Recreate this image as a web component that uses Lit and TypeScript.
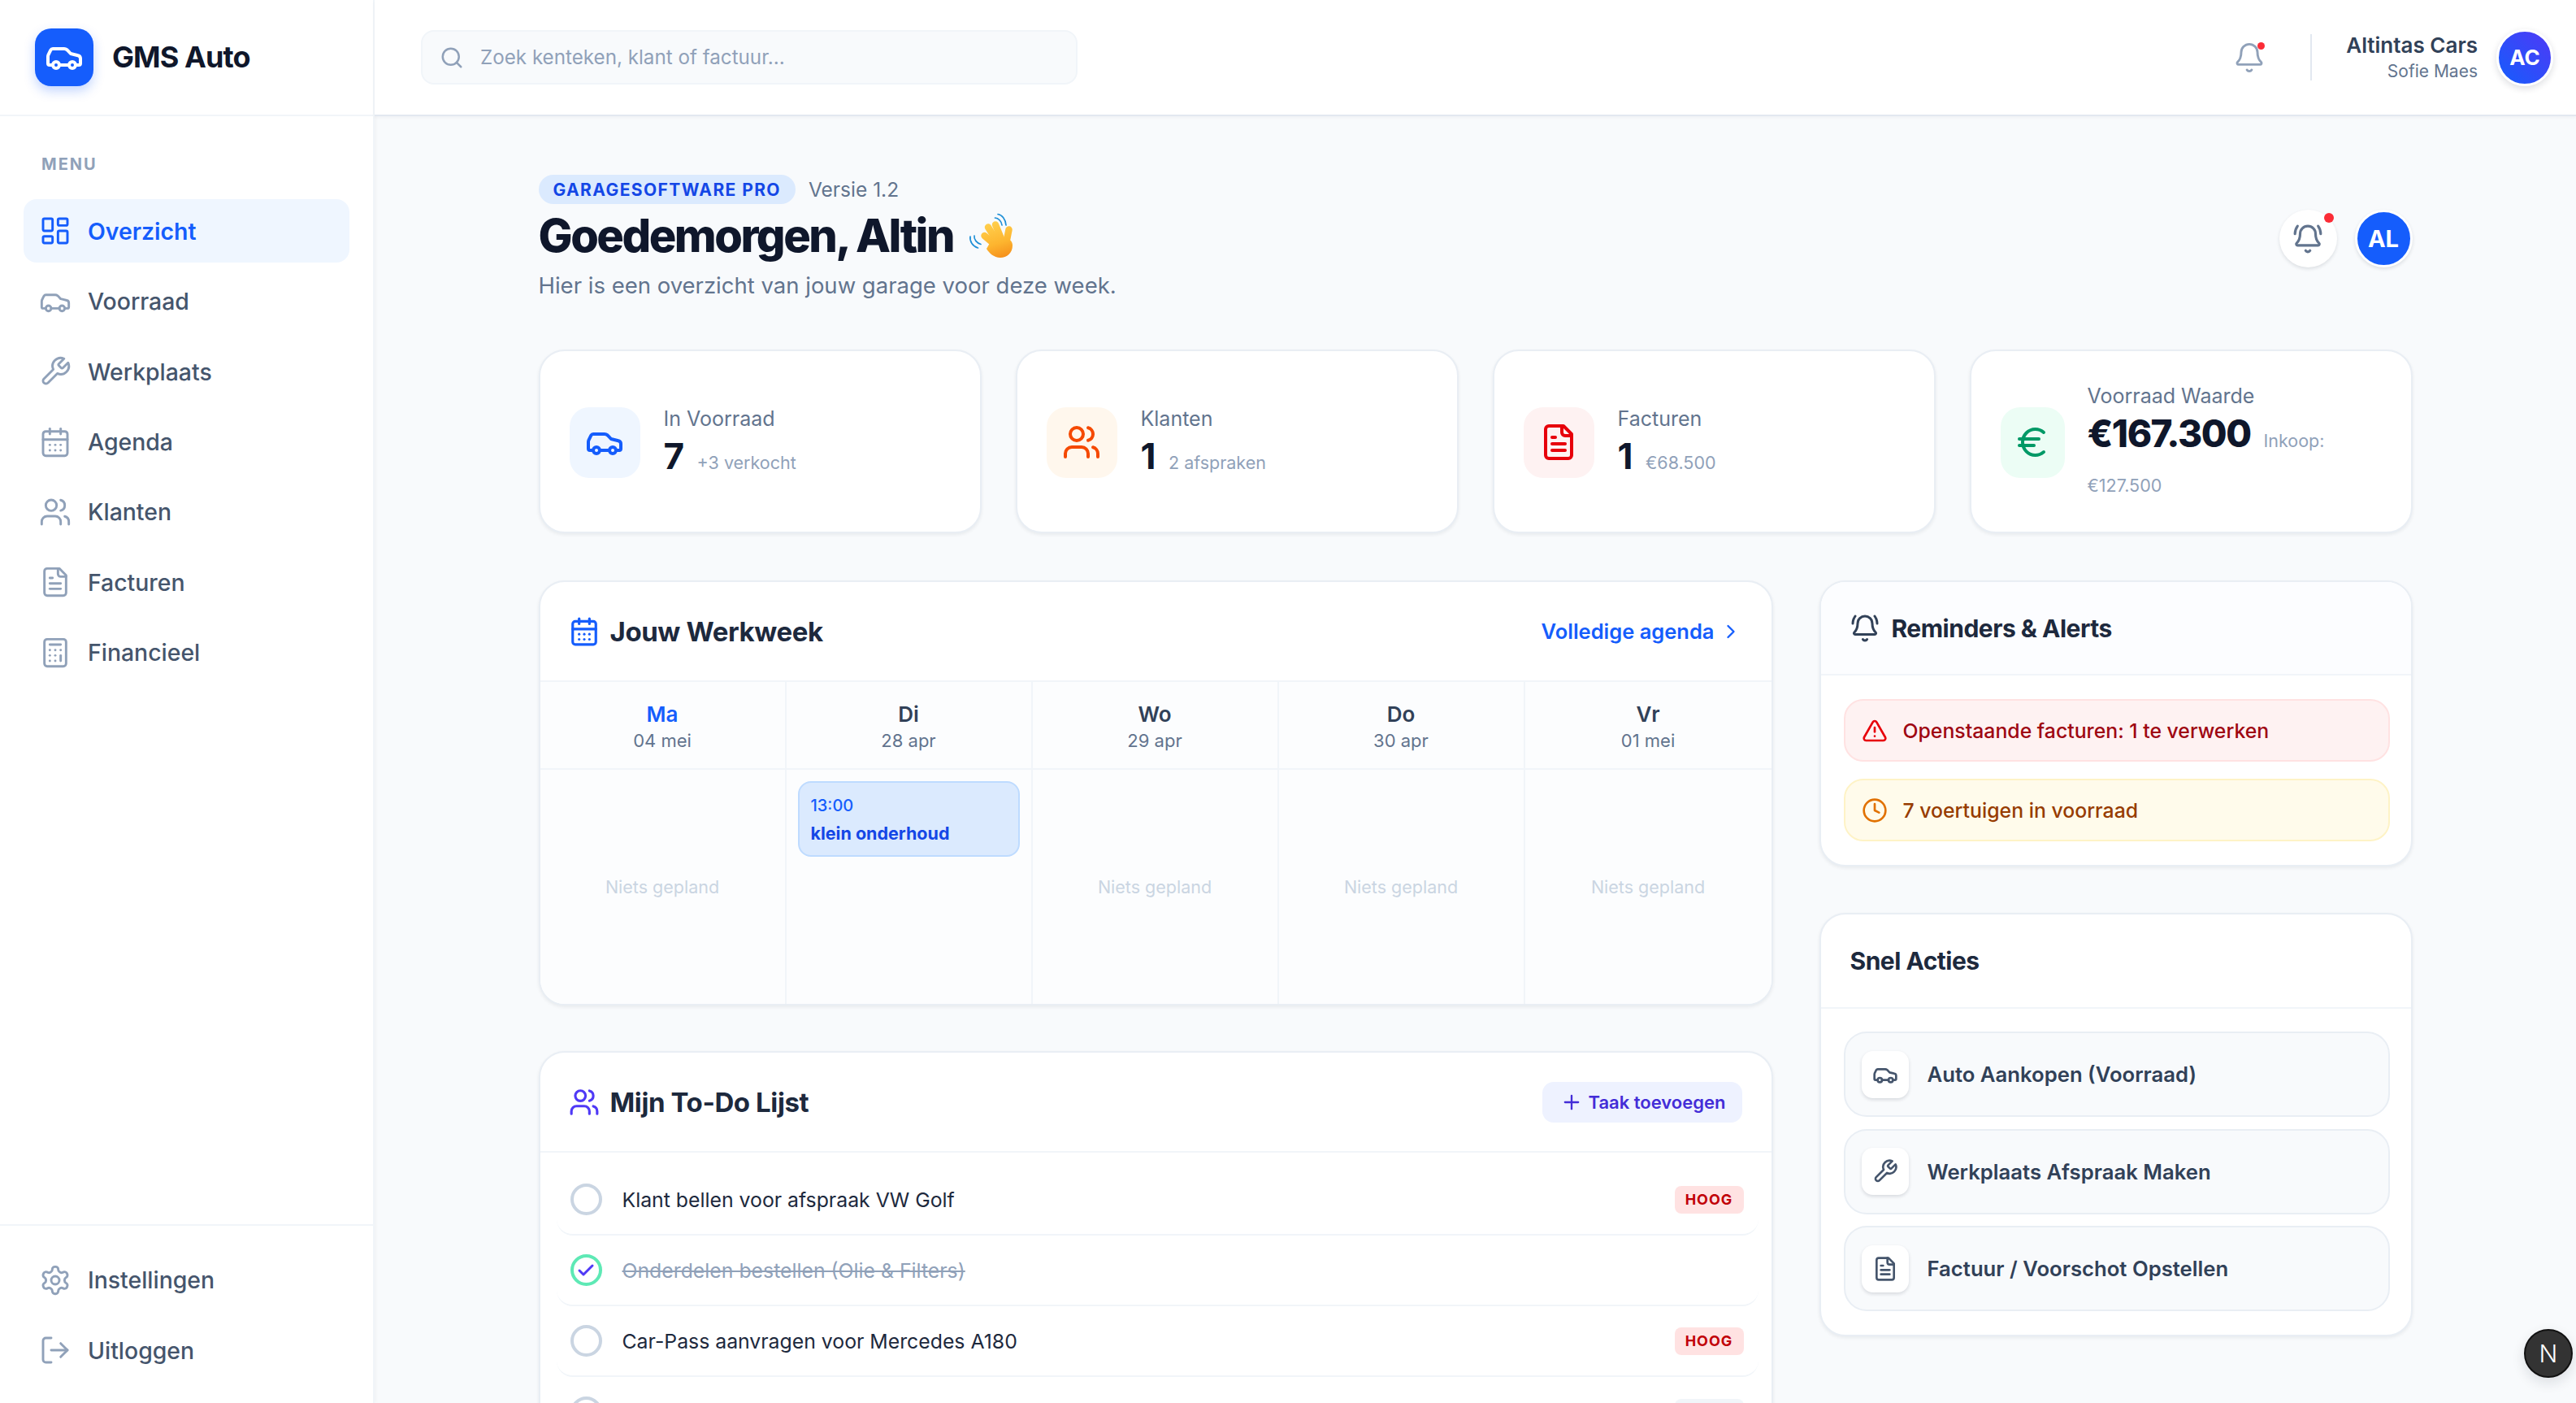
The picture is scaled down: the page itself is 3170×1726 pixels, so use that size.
import { LitElement, html, css, svg } from "lit";
import { customElement } from "lit/decorators.js";

const I: Record<string, any> = {
  car: svg`<path d="M19 17h2c.6 0 1-.4 1-1v-3c0-.9-.7-1.7-1.5-1.9C18.7 10.6 16 10 16 10s-1.3-1.4-2.2-2.3c-.5-.4-1.1-.7-1.8-.7H5c-.6 0-1.1.4-1.4.9l-1.4 2.9A3.7 3.7 0 0 0 2 12v4c0 .6.4 1 1 1h2"/><circle cx="7" cy="17" r="2"/><path d="M9 17h6"/><circle cx="17" cy="17" r="2"/>`,
  dash: svg`<rect width="7" height="9" x="3" y="3" rx="1"/><rect width="7" height="5" x="14" y="3" rx="1"/><rect width="7" height="9" x="14" y="12" rx="1"/><rect width="7" height="5" x="3" y="16" rx="1"/>`,
  wrench: svg`<path d="M14.7 6.3a1 1 0 0 0 0 1.4l1.6 1.6a1 1 0 0 0 1.4 0l3.77-3.77a6 6 0 0 1-7.94 7.94l-6.91 6.91a2.12 2.12 0 0 1-3-3l6.91-6.91a6 6 0 0 1 7.94-7.94l-3.76 3.76z"/>`,
  cal: svg`<path d="M8 2v4"/><path d="M16 2v4"/><rect width="18" height="18" x="3" y="4" rx="2"/><path d="M3 10h18"/><path d="M8 14h.01"/><path d="M12 14h.01"/><path d="M16 14h.01"/><path d="M8 18h.01"/><path d="M12 18h.01"/><path d="M16 18h.01"/>`,
  users: svg`<path d="M16 21v-2a4 4 0 0 0-4-4H6a4 4 0 0 0-4 4v2"/><circle cx="9" cy="7" r="4"/><path d="M22 21v-2a4 4 0 0 0-3-3.87"/><path d="M16 3.13a4 4 0 0 1 0 7.75"/>`,
  file: svg`<path d="M15 2H6a2 2 0 0 0-2 2v16a2 2 0 0 0 2 2h12a2 2 0 0 0 2-2V7Z"/><path d="M14 2v4a2 2 0 0 0 2 2h4"/><path d="M10 9H8"/><path d="M16 13H8"/><path d="M16 17H8"/>`,
  calc: svg`<rect width="16" height="20" x="4" y="2" rx="2"/><path d="M8 6h8"/><path d="M16 14v4"/><path d="M16 10h.01"/><path d="M12 10h.01"/><path d="M8 10h.01"/><path d="M12 14h.01"/><path d="M8 14h.01"/><path d="M12 18h.01"/><path d="M8 18h.01"/>`,
  gear: svg`<path d="M12.22 2h-.44a2 2 0 0 0-2 2v.18a2 2 0 0 1-1 1.73l-.43.25a2 2 0 0 1-2 0l-.15-.08a2 2 0 0 0-2.73.73l-.22.38a2 2 0 0 0 .73 2.73l.15.1a2 2 0 0 1 1 1.72v.51a2 2 0 0 1-1 1.74l-.15.09a2 2 0 0 0-.73 2.73l.22.38a2 2 0 0 0 2.73.73l.15-.08a2 2 0 0 1 2 0l.43.25a2 2 0 0 1 1 1.73V20a2 2 0 0 0 2 2h.44a2 2 0 0 0 2-2v-.18a2 2 0 0 1 1-1.73l.43-.25a2 2 0 0 1 2 0l.15.08a2 2 0 0 0 2.73-.73l.22-.39a2 2 0 0 0-.73-2.73l-.15-.08a2 2 0 0 1-1-1.74v-.5a2 2 0 0 1 1-1.74l.15-.09a2 2 0 0 0 .73-2.73l-.22-.38a2 2 0 0 0-2.73-.73l-.15.08a2 2 0 0 1-2 0l-.43-.25a2 2 0 0 1-1-1.73V4a2 2 0 0 0-2-2z"/><circle cx="12" cy="12" r="3"/>`,
  logout: svg`<path d="M9 21H5a2 2 0 0 1-2-2V5a2 2 0 0 1 2-2h4"/><path d="m16 17 5-5-5-5"/><path d="M21 12H9"/>`,
  bell: svg`<path d="M10.268 21a2 2 0 0 0 3.464 0"/><path d="M3.262 15.326A1 1 0 0 0 4 17h16a1 1 0 0 0 .74-1.673C19.41 13.956 18 12.499 18 8A6 6 0 0 0 6 8c0 4.499-1.411 5.956-2.738 7.326"/>`,
  ring: svg`<path d="M10.268 21a2 2 0 0 0 3.464 0"/><path d="M22 8c0-2.3-.8-4.3-2-6"/><path d="M3.262 15.326A1 1 0 0 0 4 17h16a1 1 0 0 0 .74-1.673C19.41 13.956 18 12.499 18 8A6 6 0 0 0 6 8c0 4.499-1.411 5.956-2.738 7.326"/><path d="M4 2C2.8 3.7 2 5.7 2 8"/>`,
  search: svg`<path d="m21 21-4.34-4.34"/><circle cx="11" cy="11" r="8"/>`,
  alert: svg`<path d="m21.73 18-8-14a2 2 0 0 0-3.48 0l-8 14A2 2 0 0 0 4 21h16a2 2 0 0 0 1.73-3"/><path d="M12 9v4"/><path d="M12 17h.01"/>`,
  clock: svg`<circle cx="12" cy="12" r="10"/><path d="M12 6v6l4 2"/>`,
  euro: svg`<path d="M4 10h12"/><path d="M4 14h9"/><path d="M19 6a7.7 7.7 0 0 0-5.2-2A7.9 7.9 0 0 0 6 12c0 4.4 3.5 8 7.8 8 2 0 3.8-.8 5.2-2"/>`,
  chev: svg`<path d="m9 18 6-6-6-6"/>`,
  plus: svg`<path d="M5 12h14"/><path d="M12 5v14"/>`,
  check: svg`<path d="M20 6 9 17l-5-5"/>`,
};

const icon = (n: string, cls = "") => html`<svg class="ic ${cls}" viewBox="0 0 24 24" fill="none" stroke="currentColor" stroke-linecap="round" stroke-linejoin="round">${I[n]}</svg>`;

const hand = html`<svg class="hand" viewBox="0 0 80 70" fill="none">
  <defs><linearGradient id="hg" gradientUnits="userSpaceOnUse" x1="40" y1="18" x2="54" y2="62"><stop offset="0" stop-color="#ffcf4d"/><stop offset=".6" stop-color="#fdb52f"/><stop offset="1" stop-color="#f5901c"/></linearGradient></defs>
  <g stroke="#1f8fd6" stroke-width="1.7" stroke-linecap="round">
    <path d="M48 8.500c5 .6 9.500 6 10 13.500"/><path d="M44.500 13c4 .3 8 4 8.500 9"/>
    <path d="M14 36c-1 6 3 12 9.500 14"/><path d="M19 35c-.8 4.500 3 9 8 10.500"/>
  </g>
  <g stroke="url(#hg)" stroke-width="8.500" stroke-linecap="round">
    <path d="M31.500 35l13 11"/><path d="M36 24.500l10 16"/><path d="M45 21.500l7 17"/><path d="M61.500 27.500l-3 15"/>
  </g>
  <path d="M38 44c3-6 12-8 19-6 6 1 9 4 9 9 0 9-7 15-15 15-8 0-14-6-17-11z" fill="url(#hg)"/>
</svg>`;

const nav = [
  ["dash", "Overzicht"], ["car", "Voorraad"], ["wrench", "Werkplaats"], ["cal", "Agenda"],
  ["users", "Klanten"], ["file", "Facturen"], ["calc", "Financieel"],
];
const days = [["Ma", "04 mei"], ["Di", "28 apr"], ["Wo", "29 apr"], ["Do", "30 apr"], ["Vr", "01 mei"]];

@customElement("app-root")
export class AppRoot extends LitElement {
  static styles = css`
    :host { display: flex; width: 100%; height: 100vh; overflow: hidden; position: relative; background: #f8fafc; color: #0f172b;
      font-family: Inter, "Liberation Sans", sans-serif; }
    * { box-sizing: border-box; }
    .ic { display: block; flex: none; width: 40px; height: 40px; stroke-width: 1.75; }
    .side { width: 461px; flex: none; height: 100%; background: #fff; border-right: 2px solid #f1f5f9; box-shadow: 2px 0 4px rgba(15,23,42,.03); display: flex; flex-direction: column; }
    .brand { height: 143px; flex: none; border-bottom: 2px solid #f1f5f9; display: flex; align-items: center; padding: 0 0 1px 43px; gap: 23px; }
    .logo { width: 72px; height: 71px; border-radius: 20px; background: #155dfc; color: #fff; display: flex; align-items: center; justify-content: center; box-shadow: 0 6px 14px rgba(21,93,252,.25); }
    .logo .ic { width: 48px; height: 48px; stroke-width: 2; }
    .brand b { font-size: 36px; font-weight: 700; letter-spacing: -.9px; color: #0f172b; }
    .nav { flex: 1; padding: 45px 29px 0; display: flex; flex-direction: column; gap: 8.4px; }
    .menu { font-size: 20px; font-weight: 700; letter-spacing: 2px; color: #90a1b9; padding-left: 22px; line-height: 28px; margin-bottom: 21px; }
    .item { height: 78px; flex: none; border-radius: 16px; display: flex; align-items: center; padding-left: 19px; gap: 20px; font-size: 28.4px; font-weight: 500; color: #45556c; }
    .item .ic { color: #90a1b9; }
    .item.on { background: #eff6ff; color: #155dfc; font-weight: 600; }
    .item.on .ic { color: #155dfc; }
    .foot { border-top: 2px solid #f1f5f9; padding: 28px 29px 26px; display: flex; flex-direction: column; gap: 8.4px; }

    .right { flex: 1; min-width: 0; height: 100%; display: flex; flex-direction: column; }
    .top { height: 143px; flex: none; background: #fff; border-bottom: 2px solid #e2e8f0; box-shadow: 0 2px 4px rgba(15,23,42,.04); display: flex; align-items: center; padding: 0 28px 0 57px; position: relative; }
    .search { width: 808px; height: 67px; border: 2px solid #f1f5f9; outline: 0; background: #f8fafc; border-radius: 16px; display: flex; align-items: center; padding-left: 21px; gap: 20px; color: #90a1b9; font-size: 24.2px; }
    .search .ic { width: 30px; height: 30px; stroke-width: 2; }
    .top-r { margin-left: auto; display: flex; align-items: center; }
    .bellwrap { position: relative; color: #90a1b9; margin-right: 55px; }
    .bellwrap .dot { position: absolute; width: 9px; height: 9px; border-radius: 50%; background: #fb2c36; right: 1px; top: 1px; }
    .divi { width: 2px; height: 57px; background: #e2e8f0; margin-right: 42px; }
    .who { text-align: right; margin-right: 23px; }
    .who b { display: block; font-size: 26px; font-weight: 600; line-height: 34px; color: #314158; }
    .who span { display: block; font-size: 21px; color: #62748e; line-height: 30px; }
    .ava { width: 70px; height: 70px; border-radius: 50%; border: 3px solid #fff; background: linear-gradient(45deg, #155dfc, #4f39f6); color: #fff; font-size: 26px; font-weight: 700; display: flex; align-items: center; justify-content: center; box-shadow: 0 3px 8px rgba(15,23,42,.14); }

    .main { flex: 1; min-height: 0; overflow: hidden; display: flex; justify-content: center; padding-top: 72px; }
    .wrap { width: 2306px; flex: none; }
    .greet { display: flex; justify-content: space-between; margin-bottom: 60px; height: 155px; }
    .tagrow { display: flex; align-items: center; gap: 16px; font-size: 24.5px; color: #62748e; height: 36px; }
    .tag { height: 36px; padding: 0 18px; border-radius: 18px; background: #dbeafe; color: #1447e6; font-size: 21px; font-weight: 700; letter-spacing: 1.4px; display: flex; align-items: center; }
    h1 { margin: 7px 0 0; font-size: 56px; font-weight: 800; letter-spacing: -2.5px; line-height: 64px; color: #0f172b; display: flex; align-items: center; gap: 7px; }
    .hand { width: 80px; height: 70px; margin: -3px 0; }
    .sub { font-size: 27.5px; color: #62748e; margin-top: 10px; line-height: 38px; }
    .gr { display: flex; gap: 22px; margin-top: 43px; }
    .bbtn { width: 71px; height: 71px; border-radius: 50%; background: #fff; box-shadow: 0 2px 4px rgba(15,23,42,.12); color: #62748e; display: flex; align-items: center; justify-content: center; position: relative; }
    .bbtn .ic { width: 38px; height: 38px; stroke-width: 2; }
    .bbtn i { position: absolute; width: 12px; height: 12px; background: #fb2c36; border-radius: 50%; top: 4px; right: 4px; }
    .al { width: 71px; height: 71px; border-radius: 50%; background: #155dfc; border: 3px solid #fff; box-shadow: 0 2px 4px rgba(15,23,42,.12); color: #fff; font-size: 29px; font-weight: 700; display: flex; align-items: center; justify-content: center; }

    .card { background: #fff; border: 2px solid #e9eef4; border-radius: 32px; box-shadow: 0 2px 4px rgba(15,23,42,.07); overflow: hidden; }
    .stats { display: grid; grid-template-columns: repeat(4, 1fr); gap: 42px; margin-bottom: 58px; }
    .stat { height: 226px; display: flex; align-items: center; padding: 2px 36px 0; gap: 29px; }
    .sicon { width: 87px; height: 87px; border-radius: 24px; flex: 0 1 87px; display: flex; align-items: center; justify-content: center; }
    .sicon .ic { width: 48px; height: 48px; stroke-width: 2; }
    .l { font-size: 25px; color: #62748e; line-height: 32px; }
    .v { display: flex; flex-wrap: wrap; align-items: baseline; column-gap: 16px; margin-top: 2px; }
    .v b { font-size: 44px; font-weight: 700; letter-spacing: -.5px; color: #0f172b; line-height: 56px; }
    .v small { font-size: 21.5px; color: #90a1b9; line-height: 32px; }
    .st4 .sicon { flex-basis: 79px; width: 79px; }
    .st4 { gap: 28px; }
    .st4 .v b { font-size: 46px; font-weight: 800; letter-spacing: -1.5px; }
    .st4 .v small:last-child { width: 100%; margin-top: 20px; }
    .st4 .vtext { flex: 1; min-width: 0; padding-bottom: 5px; }

    .cols { display: flex; gap: 57px; align-items: flex-start; }
    .cl { width: 1519px; flex: none; display: flex; flex-direction: column; gap: 56px; }
    .cr { flex: 1; min-width: 0; display: flex; flex-direction: column; gap: 57px; }
    .ch { height: 123px; display: flex; align-items: center; padding: 0 36px; border-bottom: 2px solid #f1f5f9; }
    .cl .ch { padding-left: 35px; }
    .ch h2 { margin: 0; font-size: 33px; font-weight: 700; color: #1d293d; letter-spacing: -.4px; }
    .ch .ic { width: 38px; height: 38px; stroke-width: 2; margin-right: 13px; }
    .link { margin-left: auto; display: flex; align-items: center; gap: 6px; color: #155dfc; font-size: 25.5px; font-weight: 600; }
    .link .ic { width: 28px; height: 28px; margin: 0; }
    .heads, .bodies { display: grid; grid-template-columns: repeat(5, 1fr); background: #fcfdfe; }
    .heads { height: 108px; border-bottom: 2px solid #f1f5f9; }
    .hd { display: flex; flex-direction: column; align-items: center; justify-content: center; border-right: 2px solid #f1f5f9; padding-top: 4px; }
    .hd:last-child, .bd:last-child { border-right: 0; }
    .hd b { font-size: 26px; font-weight: 600; color: #314158; line-height: 34px; }
    .hd b.t { color: #155dfc; }
    .hd span { font-size: 22px; color: #62748e; line-height: 30px; }
    .bodies { height: 288px; }
    .bd { border-right: 2px solid #f1f5f9; display: flex; align-items: center; justify-content: center; font-size: 21.5px; color: #cad5e2; padding: 14px; }
    .bd.top-a { align-items: flex-start; }
    .ev { width: 100%; height: 93px; background: #dbeafe; border: 2px solid #bedbff; border-radius: 16px; padding: 14px 14px; }
    .ev span { display: block; font-size: 20px; color: #155dfc; font-weight: 500; line-height: 28px; }
    .ev b { display: block; font-size: 21.5px; color: #1447e6; font-weight: 700; line-height: 32px; margin-top: 4px; }

    .todo .ic { color: #4f39f6; }
    .addb { margin-left: auto; height: 50px; border-radius: 14px; background: #eef2ff; color: #432dd7; font-size: 22px; font-weight: 600; display: flex; align-items: center; padding: 0 20px 0 22px; gap: 7px; }
    .todo .addb .ic { width: 28px; height: 28px; margin: 0; color: #432dd7; }
    .list { padding: 15px 16px 0 20px; }
    .row { height: 87px; border-bottom: 2px solid #f1f5f9; border-radius: 20px; display: flex; align-items: center; padding: 0 18px 0 17px; gap: 25px; font-size: 24.8px; color: #1d293d; }
    .row:last-child { border-bottom: 0; }
    .circ { width: 39px; height: 39px; border: 4px solid #cad5e2; border-radius: 50%; flex: none; display: flex; align-items: center; justify-content: center; }
    .circ.ok { border-color: #5ee9b5; color: #00bc7d; }
    .circ .ic { width: 24px; height: 24px; stroke-width: 3; }
    .row.done { color: #90a1b9; text-decoration: line-through; }
    .pri { margin-left: auto; width: 85px; height: 34px; border-radius: 8px; background: #ffe2e2; color: #c10007; font-size: 18px; font-weight: 700; letter-spacing: 1px; display: flex; align-items: center; justify-content: center; }
    .pri.grey { background: #f1f5f9; }

    .rem .ch { height: 115px; background: #fcfdff; }
    .rem .ic { width: 36px; height: 36px; color: #314158; margin-right: 15px; }
    .ch.h3 h2 { font-size: 30px; letter-spacing: -.5px; }
    .pad { padding: 29px 26px 29px 28px; display: flex; flex-direction: column; gap: 21px; }
    .alert { height: 77px; border-radius: 24px; border: 2px solid; display: flex; align-items: center; padding-left: 20px; gap: 19px; font-size: 24.8px; font-weight: 500; }
    .alert .ic { width: 32px; height: 32px; stroke-width: 2; margin: 0; }
    .a1 { background: #fef2f2; border-color: #ffe2e2; color: #9f0712; }
    .a1 .ic { color: #e7000b; }
    .a2 { background: #fffbeb; border-color: #fef3c6; color: #973c00; }
    .a2 .ic { color: #e17100; }
    .qk .ch { height: 116px; }
    .qbody { padding: 28px 26px 29px 28px; display: flex; flex-direction: column; gap: 14.5px; }
    .q { height: 105px; background: #f8fafc; border: 2px solid #e9eef4; border-radius: 28px; display: flex; align-items: center; padding-left: 20px; gap: 23px; font-size: 25.7px; font-weight: 600; color: #314158; }
    .qi { width: 58px; height: 58px; flex: none; background: #fff; border-radius: 14px; box-shadow: 0 2px 4px rgba(15,23,42,.14); display: flex; align-items: center; justify-content: center; color: #45556c; }
    .qi .ic { width: 32px; height: 32px; stroke-width: 2; }
    .nx { position: absolute; left: 3106px; top: 1635px; width: 60px; height: 60px; border-radius: 50%; background: #333; border: 2px solid #111; color: #fff; display: flex; align-items: center; justify-content: center; font-size: 30px; font-weight: 300; box-shadow: 0 6px 16px rgba(15,23,42,.12); }
  `;

  private stat(ic: string, bg: string, col: string, label: string, val: string, sm: string) {
    return html`<div class="card stat">
      <div class="sicon" style="background:${bg};color:${col}">${icon(ic)}</div>
      <div><div class="l">${label}</div><div class="v"><b>${val}</b><small>${sm}</small></div></div>
    </div>`;
  }

  render() {
    return html`
      <aside class="side">
        <div class="brand"><div class="logo">${icon("car")}</div><b>GMS Auto</b></div>
        <div class="nav">
          <div class="menu">MENU</div>
          ${nav.map(([i, t], k) => html`<div class="item ${k === 0 ? "on" : ""}">${icon(i)}${t}</div>`)}
        </div>
        <div class="foot">
          <div class="item">${icon("gear")}Instellingen</div>
          <div class="item">${icon("logout")}Uitloggen</div>
        </div>
      </aside>
      <div class="right">
        <header class="top">
          <div class="search">${icon("search")}<span>Zoek kenteken, klant of factuur...</span></div>
          <div class="top-r">
            <div class="bellwrap">${icon("bell")}<span class="dot"></span></div>
            <div class="divi"></div>
            <div class="who"><b>Altintas Cars</b><span>Sofie Maes</span></div>
            <div class="ava">AC</div>
          </div>
        </header>
        <main class="main"><div class="wrap">
          <div class="greet">
            <div>
              <div class="tagrow"><span class="tag">GARAGESOFTWARE PRO</span>Versie 1.2</div>
              <h1>Goedemorgen, Altin ${hand}</h1>
              <div class="sub">Hier is een overzicht van jouw garage voor deze week.</div>
            </div>
            <div class="gr">
              <div class="bbtn">${icon("ring")}<i></i></div>
              <div class="al">AL</div>
            </div>
          </div>
          <div class="stats">
            ${this.stat("car", "#eff6ff", "#155dfc", "In Voorraad", "7", "+3 verkocht")}
            ${this.stat("users", "#fff7ed", "#f54900", "Klanten", "1", "2 afspraken")}
            ${this.stat("file", "#fef2f2", "#e7000b", "Facturen", "1", "€68.500")}
            <div class="card stat st4">
              <div class="sicon" style="background:#ecfdf5;color:#009966">${icon("euro")}</div>
              <div class="vtext"><div class="l">Voorraad Waarde</div><div class="v"><b>€167.300</b><small>Inkoop:</small><small>€127.500</small></div></div>
            </div>
          </div>
          <div class="cols">
            <div class="cl">
              <section class="card">
                <div class="ch"><span style="color:#155dfc">${icon("cal")}</span><h2>Jouw Werkweek</h2><div class="link">Volledige agenda ${icon("chev")}</div></div>
                <div class="heads">${days.map(([d, n], k) => html`<div class="hd"><b class=${k === 0 ? "t" : ""}>${d}</b><span>${n}</span></div>`)}</div>
                <div class="bodies">
                  <div class="bd">Niets gepland</div>
                  <div class="bd top-a"><div class="ev"><span>13:00</span><b>klein onderhoud</b></div></div>
                  <div class="bd">Niets gepland</div>
                  <div class="bd">Niets gepland</div>
                  <div class="bd">Niets gepland</div>
                </div>
              </section>
              <section class="card todo">
                <div class="ch">${icon("users")}<h2>Mijn To-Do Lijst</h2><div class="addb">${icon("plus")}Taak toevoegen</div></div>
                <div class="list">
                  <div class="row"><span class="circ"></span>Klant bellen voor afspraak VW Golf<span class="pri">HOOG</span></div>
                  <div class="row done"><span class="circ ok">${icon("check")}</span>Onderdelen bestellen (Olie &amp; Filters)</div>
                  <div class="row"><span class="circ"></span>Car-Pass aanvragen voor Mercedes A180<span class="pri">HOOG</span></div>
                  <div class="row"><span class="circ"></span><span class="pri grey"></span></div>
                </div>
              </section>
            </div>
            <div class="cr">
              <section class="card rem">
                <div class="ch h3">${icon("ring")}<h2>Reminders &amp; Alerts</h2></div>
                <div class="pad">
                  <div class="alert a1">${icon("alert")}Openstaande facturen: 1 te verwerken</div>
                  <div class="alert a2">${icon("clock")}7 voertuigen in voorraad</div>
                </div>
              </section>
              <section class="card qk">
                <div class="ch h3"><h2>Snel Acties</h2></div>
                <div class="qbody">
                  <div class="q"><span class="qi">${icon("car")}</span>Auto Aankopen (Voorraad)</div>
                  <div class="q"><span class="qi">${icon("wrench")}</span>Werkplaats Afspraak Maken</div>
                  <div class="q"><span class="qi">${icon("file")}</span>Factuur / Voorschot Opstellen</div>
                </div>
              </section>
            </div>
          </div>
        </div></main>
      </div>
      <div class="nx">N</div>
    `;
  }
}
